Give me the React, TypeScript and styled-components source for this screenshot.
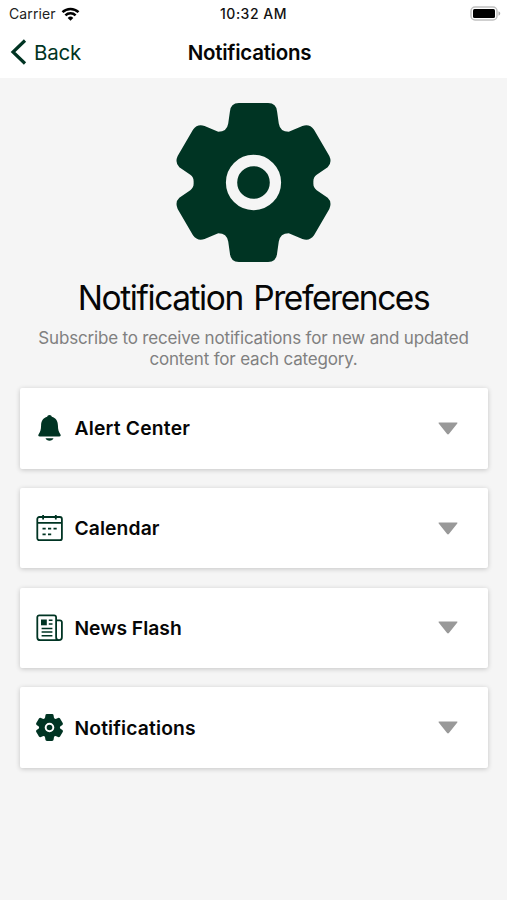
import React from "react";
import styled, { createGlobalStyle } from "styled-components";

const green = "#003423";

const GlobalStyle = createGlobalStyle`
  body {
    margin: 0;
    background: #f5f5f5;
    font-family: Inter, "Liberation Sans", sans-serif;
    color: #060606;
  }
`;

const Screen = styled.div`
  height: 900px;
  background: #f5f5f5;
  overflow: hidden;
`;

const Header = styled.header`
  height: 78px;
  background: #fff;
`;

const StatusBar = styled.div`
  height: 26px;
  padding: 0 6px 0 9px;
  display: grid;
  grid-template-columns: 1fr auto 1fr;
  align-items: center;
  font-size: 14px;
  line-height: 26px;
`;

const Carrier = styled.span`
  display: flex;
  align-items: center;
  gap: 5px;
  letter-spacing: 0.1px;
  padding-top: 1px;
  color: #222;
`;

const Clock = styled.span`
  font-weight: 500;
  font-size: 14px;
  letter-spacing: 0.5px;
  padding: 1px 3px 0 0;
  color: #111;
`;

const BatteryIcon = styled.svg`
  justify-self: end;
  display: block;
`;

const NavBar = styled.nav`
  height: 52px;
  padding: 0 18px 0 10px;
  display: grid;
  grid-template-columns: 1fr auto 1fr;
  align-items: center;
`;

const BackButton = styled.button`
  border: 0;
  padding: 0;
  background: none;
  display: flex;
  align-items: center;
  gap: 7px;
  color: ${green};
  font: 400 20.5px/26px Inter, sans-serif;
  letter-spacing: -0.2px;
`;

const BackLabel = styled.span`
  padding-top: 1px;
`;

const NavTitle = styled.h1`
  margin: 0;
  padding-top: 1px;
  font-size: 20.5px;
  line-height: 26px;
  font-weight: 600;
  letter-spacing: -0.27px;
`;

const Intro = styled.section`
  padding-top: 24.5px;
  display: flex;
  flex-direction: column;
  align-items: center;
  text-align: center;
`;

const Title = styled.h2`
  margin: 14.5px 0 0;
  font-size: 33.5px;
  line-height: 44px;
  font-weight: 400;
  letter-spacing: -1.43px;
  word-spacing: 2.5px;
  white-space: nowrap;
`;

const Description = styled.p`
  margin: 8px 0 0;
  width: 450px;
  font-size: 17px;
  line-height: 20.5px;
  letter-spacing: -0.175px;
  color: #808080;
`;

const CategoryList = styled.main`
  padding: 19.4px 19.4px 0 20px;
  display: flex;
  flex-direction: column;
  gap: 19.5px;
`;

const Card = styled.button`
  height: 80.2px;
  border: 0;
  border-radius: 2px;
  padding: 0 29.2px 0 16.3px;
  background: #fff;
  box-shadow: 0 1px 5px rgba(0, 0, 0, 0.2);
  display: flex;
  align-items: center;
  color: #060606;
  font: 600 19.3px/26px Inter, sans-serif;
`;

const CardLabel = styled.span<{ $spacing: number }>`
  flex: 1;
  margin-left: 11.2px;
  text-align: left;
  letter-spacing: ${(p) => p.$spacing}px;
`;

const Icon = styled.svg`
  display: block;
  flex: none;
`;

const Gear = ({ width, height, ring }: { width: number; height: number; ring: string }) => (
  <Icon width={width} height={height} viewBox="33 38 466 476" preserveAspectRatio="none">
    <path
      fill={green}
      d="M222 38H310Q335 38 337 64L342 99Q346 124 372 124L413 107Q434 99 448 118L494 197Q503 217 489 230L456 253Q446 260 446 272V280Q446 292 456 299L489 322Q503 335 494 355L448 434Q434 453 413 445L372 428Q346 428 342 453L337 488Q335 514 310 514H222Q197 514 195 488L190 453Q186 428 160 428L119 445Q98 453 84 434L38 355Q29 335 43 322L76 299Q86 292 86 280V272Q86 260 76 253L43 230Q29 217 38 197L84 118Q98 99 119 107L160 124Q186 124 190 99L195 64Q197 38 222 38Z"
    />
    <circle cx="266" cy="276" r="66" fill="none" stroke={ring} strokeWidth="34" />
  </Icon>
);

const BellIcon = () => (
  <Icon width="27" height="28" viewBox="0 0 27 28" fill={green}>
    <path d="M13.5 1.1c1.3 0 2 .8 2.3 1.600 4 1.200 6 4.200 6.100 8.600.1 4.600.8 6.600 2.300 8.700 1 1.400.6 2.500-1 2.500H3.800c-1.600 0-2-1.100-1-2.500 1.500-2.100 2.200-4.100 2.300-8.700.1-4.400 2.100-7.400 6.100-8.600.3-.8 1-1.600 2.300-1.600Z" />
    <path d="M9.500 24.300h8c-.5 1.500-2 2.500-4 2.500s-3.500-1-4-2.500Z" />
  </Icon>
);

const CalendarIcon = () => (
  <Icon width="27" height="28" viewBox="0 0 27 28" fill="none" stroke={green} strokeWidth="1.8">
    <rect x="1.300" y="3" width="24.600" height="23.200" rx="2" />
    <path d="M1.300 8.900h24.600M7.100 1v4.500M19.800 1v4.500" />
    <path d="M6.500 14.700h3.200M12 14.700h3.200M17.500 14.700h3.200M6.500 20.300h3.200M12 20.300h3.200" />
  </Icon>
);

const NewsIcon = () => (
  <Icon width="27" height="28" viewBox="0 0 27 28" fill="none" stroke={green} strokeWidth="1.8">
    <path d="M23 26.200H4.300a3 3 0 0 1-3-3V3.300a2 2 0 0 1 2-2h14.800a2 2 0 0 1 2 2v20a2.900 2.900 0 0 0 5.800 0V8.300a2 2 0 0 0-2-2h-3.800" />
    <path d="M5.600 14.500h10.800M5.600 18h10.800M5.600 21.700h10.800M12.800 6.300h3.700M12.800 10h3.700" strokeWidth="1.500" />
    <rect x="5" y="5.500" width="5.800" height="5.800" fill={green} stroke="none" />
  </Icon>
);

const Caret = () => (
  <Icon width="20" height="13" viewBox="0 0 20 13">
    <path d="M1.400.5h17.200c.9 0 1.100.6.500 1.200l-8.200 10.400c-.5.600-1.300.6-1.800 0L.900 1.700C.300 1.100.500.500 1.400.5Z" fill="#999" />
  </Icon>
);

const categories = [
  { label: "Alert Center", icon: <BellIcon />, spacing: 0.2 },
  { label: "Calendar", icon: <CalendarIcon />, spacing: 0.1 },
  { label: "News Flash", icon: <NewsIcon />, spacing: 0 },
  { label: "Notifications", icon: <Gear width={27} height={27} ring="#fff" />, spacing: 0.15 },
];

export default function App() {
  return (
    <Screen>
      <GlobalStyle />
      <Header>
        <StatusBar>
          <Carrier>
            Carrier
            <Icon width="19" height="14" viewBox="0 0 18 14" fill="none" stroke="#000" strokeWidth="2.500">
              <path d="M1 5.200a11.400 11.400 0 0 1 16 0M3.900 8.300a7.200 7.200 0 0 1 10.200 0" />
              <path d="M9 13.700 6.200 10.900a4 4 0 0 1 5.600 0Z" fill="#000" stroke="none" />
            </Icon>
          </Carrier>
          <Clock>10:32 AM</Clock>
          <BatteryIcon width="31" height="15" viewBox="0 0 31 15">
            <rect x="1" y="1" width="26" height="13" rx="4" fill="#fff" stroke="#c0c0c0" strokeWidth="1.500" />
            <rect x="3" y="3" width="22" height="9" rx="1.500" fill="#000" />
            <path d="M28.500 5.300c2.300.8 2.300 3.600 0 4.400Z" fill="#aaa" />
          </BatteryIcon>
        </StatusBar>
        <NavBar>
          <BackButton>
            <Icon width="17" height="26" viewBox="0 0 17 26" fill="none" stroke={green} strokeWidth="3.200">
              <path d="M15 1.500 3 13l12 11.500" />
            </Icon>
            <BackLabel>Back</BackLabel>
          </BackButton>
          <NavTitle>Notifications</NavTitle>
        </NavBar>
      </Header>
      <Intro>
        <Gear width={155} height={159} ring="#f5f5f5" />
        <Title>Notification Preferences</Title>
        <Description>
          Subscribe to receive notifications for new and updated content for each category.
        </Description>
      </Intro>
      <CategoryList>
        {categories.map((c) => (
          <Card key={c.label}>
            {c.icon}
            <CardLabel $spacing={c.spacing}>{c.label}</CardLabel>
            <Caret />
          </Card>
        ))}
      </CategoryList>
    </Screen>
  );
}
